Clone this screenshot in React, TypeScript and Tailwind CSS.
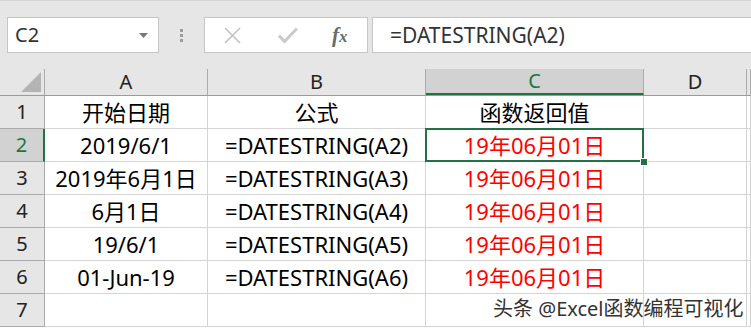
import React from 'react';

const cols = ['A', 'B', 'C', 'D', ''];
const colW = ['w-[163px]', 'w-[218px]', 'w-[218px]', 'w-[103px]', 'flex-1'];

const rows = [
  ['开始日期', '公式', '函数返回值'],
  ['2019/6/1', '=DATESTRING(A2)', '19年06月01日'],
  ['2019年6月1日', '=DATESTRING(A3)', '19年06月01日'],
  ['6月1日', '=DATESTRING(A4)', '19年06月01日'],
  ['19/6/1', '=DATESTRING(A5)', '19年06月01日'],
  ['01-Jun-19', '=DATESTRING(A6)', '19年06月01日'],
  ['', '', ''],
];

const font = "font-['Noto_Sans','Noto_Sans_CJK_SC',sans-serif]";

export default function App() {
  return (
    <div className={`relative w-[751px] h-[330px] overflow-hidden bg-white ${font}`}>
      {/* formula bar */}
      <div className="h-[69px] bg-[#e6e6e6] border-t border-[#d6d6d6] flex items-start pt-[16px] pl-[7px]">
        <div className="w-[152px] h-[36px] bg-white border border-[#c6c6c6] flex items-center pl-[7px] pr-[10px]">
          <span className="text-[20px] text-[#333] flex-1 leading-none">C2</span>
          <svg width="9" height="5" viewBox="0 0 9 5"><path d="M0 0h9L4.5 5z" fill="#777" /></svg>
        </div>
        <div className="w-[45px] h-[36px] flex flex-col items-center justify-center gap-[2px]">
          <span className="w-[3px] h-[3px] bg-[#9c9c9c]" />
          <span className="w-[3px] h-[3px] bg-[#9c9c9c]" />
          <span className="w-[3px] h-[3px] bg-[#9c9c9c]" />
        </div>
        <div className="w-[164px] h-[36px] bg-white border border-[#c6c6c6] flex items-center">
          <svg className="ml-[19px]" width="17" height="17" viewBox="0 0 17 17">
            <path d="M1 1l15 15M16 1L1 16" stroke="#c3c3c3" strokeWidth="1.6" />
          </svg>
          <svg className="ml-[37px]" width="20" height="16" viewBox="0 0 20 16">
            <path d="M1 8.5l5.5 6L19 1.5" stroke="#cacaca" strokeWidth="3" fill="none" />
          </svg>
          <span className="ml-[34px] text-[21px] italic font-bold text-[#6a6a6a] font-['Liberation_Serif',serif] leading-none">
            f<span className="text-[17px]">x</span>
          </span>
        </div>
        <div className="ml-[4px] flex-1 h-[36px] bg-white border border-[#c6c6c6] border-r-0 flex items-center pl-[17px]">
          <span className="text-[21px] text-[#333] leading-none">=DATESTRING(A2)</span>
        </div>
      </div>

      {/* column headers */}
      <div className="flex h-[27px] bg-[#e6e6e6] border-b border-[#9b9b9b]">
        <div className="w-[45px] border-r border-[#ababab] relative">
          <svg className="absolute right-[3px] bottom-[3px]" width="20" height="20" viewBox="0 0 20 20">
            <path d="M20 0V20H0z" fill="#b4b4b4" />
          </svg>
        </div>
        {cols.map((c, i) => (
          <div
            key={i}
            className={`${colW[i]} flex items-center justify-center text-[20px] leading-none border-r ${
              i === 2
                ? 'bg-[#d2d2d2] text-[#217346] border-b-2 border-b-[#217346] border-r-[#ababab]'
                : 'text-[#222] border-[#ababab]'
            }`}
          >
            {c}
          </div>
        ))}
      </div>

      {/* rows */}
      {rows.map((r, ri) => (
        <div key={ri} className="flex h-[33px]">
          <div
            className={`w-[45px] flex items-center justify-center text-[20px] leading-none border-b border-[#ababab] ${
              ri === 1
                ? 'bg-[#d2d2d2] text-[#217346] border-r-2 border-r-[#217346]'
                : 'bg-[#e6e6e6] text-[#222] border-r border-r-[#ababab]'
            }`}
          >
            {ri + 1}
          </div>
          {cols.map((_, ci) => {
            const v = ci < 3 ? r[ci] : '';
            const selected = ri === 1 && ci === 2;
            return (
              <div
                key={ci}
                className={`${colW[ci]} relative flex items-center justify-center text-[22px] leading-none whitespace-nowrap border-r border-b border-[#d4d4d4] ${
                  ci === 2 && ri > 0 ? 'text-[#ff0000]' : 'text-black'
                } ${selected ? 'z-10' : ''}`}
              >
                {v}
                {selected && (
                  <>
                    <div className="absolute -left-[1px] -top-[1px] -right-[1px] -bottom-[1px] border-2 border-[#217346]" />
                    <div className="absolute -right-[5px] -bottom-[5px] w-[8px] h-[8px] bg-[#217346] border border-white" />
                  </>
                )}
              </div>
            );
          })}
        </div>
      ))}

      {/* watermark */}
      <div className="absolute left-[493px] top-[296px] text-[20px] leading-[26px] text-[#333] whitespace-nowrap [text-shadow:0_0_2px_#fff]">
        头条 @Excel函数编程可视化
      </div>
    </div>
  );
}
